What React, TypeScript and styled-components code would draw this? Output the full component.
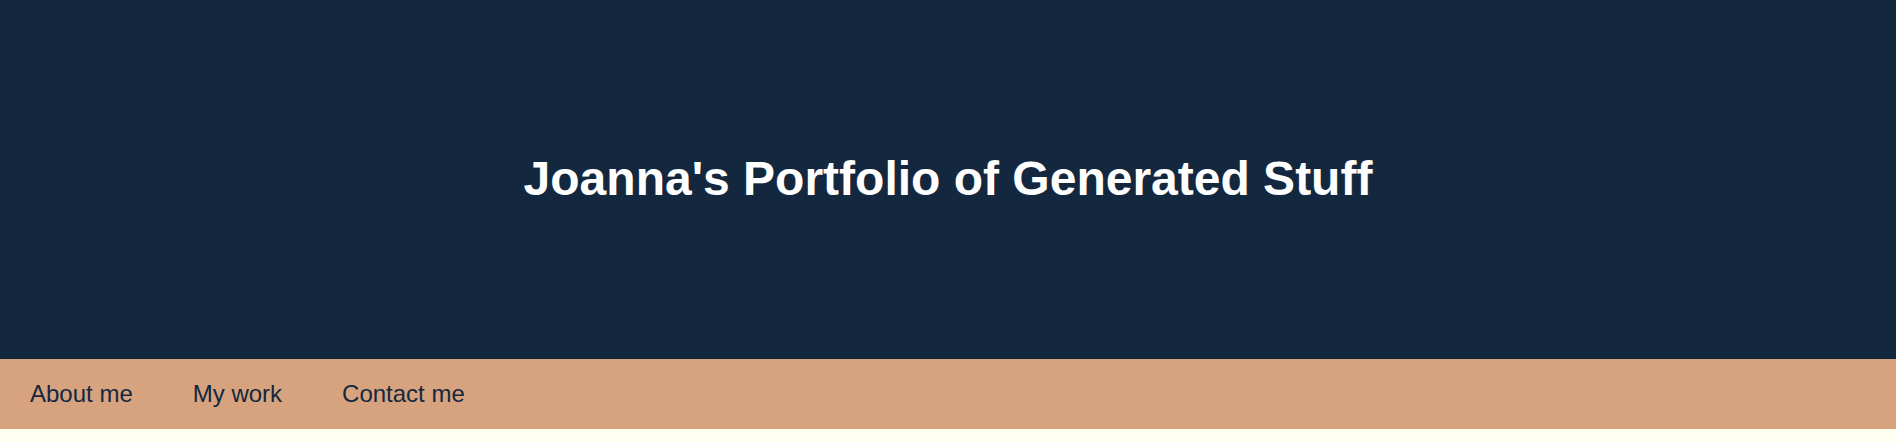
import React from "react";
import styled, { createGlobalStyle } from "styled-components";

const GlobalStyle = createGlobalStyle`
  html, body {
    margin: 0;
    padding: 0;
    background: #fffff0;
    font-family: "Liberation Sans", Arial, sans-serif;
  }
`;

const Page = styled.div`
  display: flex;
  flex-direction: column;
`;

const Header = styled.header`
  height: 359px;
  background: #13283f;
  display: flex;
  align-items: center;
  justify-content: center;
`;

const Title = styled.h1`
  margin: 0 0 2px;
  color: #ffffff;
  font-size: 48px;
  font-weight: 700;
  line-height: 1;
`;

const Nav = styled.nav`
  height: 70px;
  background: #d7a37f;
  display: flex;
  align-items: center;
`;

const NavLink = styled.a`
  color: #13283f;
  font-size: 24px;
  padding: 0 30px;
  text-decoration: none;
  line-height: 1;
`;

export default function App() {
  return (
    <>
      <GlobalStyle />
      <Page>
        <Header>
          <Title>Joanna's Portfolio of Generated Stuff</Title>
        </Header>
        <Nav>
          <NavLink href="#about">About me</NavLink>
          <NavLink href="#work">My work</NavLink>
          <NavLink href="#contact">Contact me</NavLink>
        </Nav>
      </Page>
    </>
  );
}
